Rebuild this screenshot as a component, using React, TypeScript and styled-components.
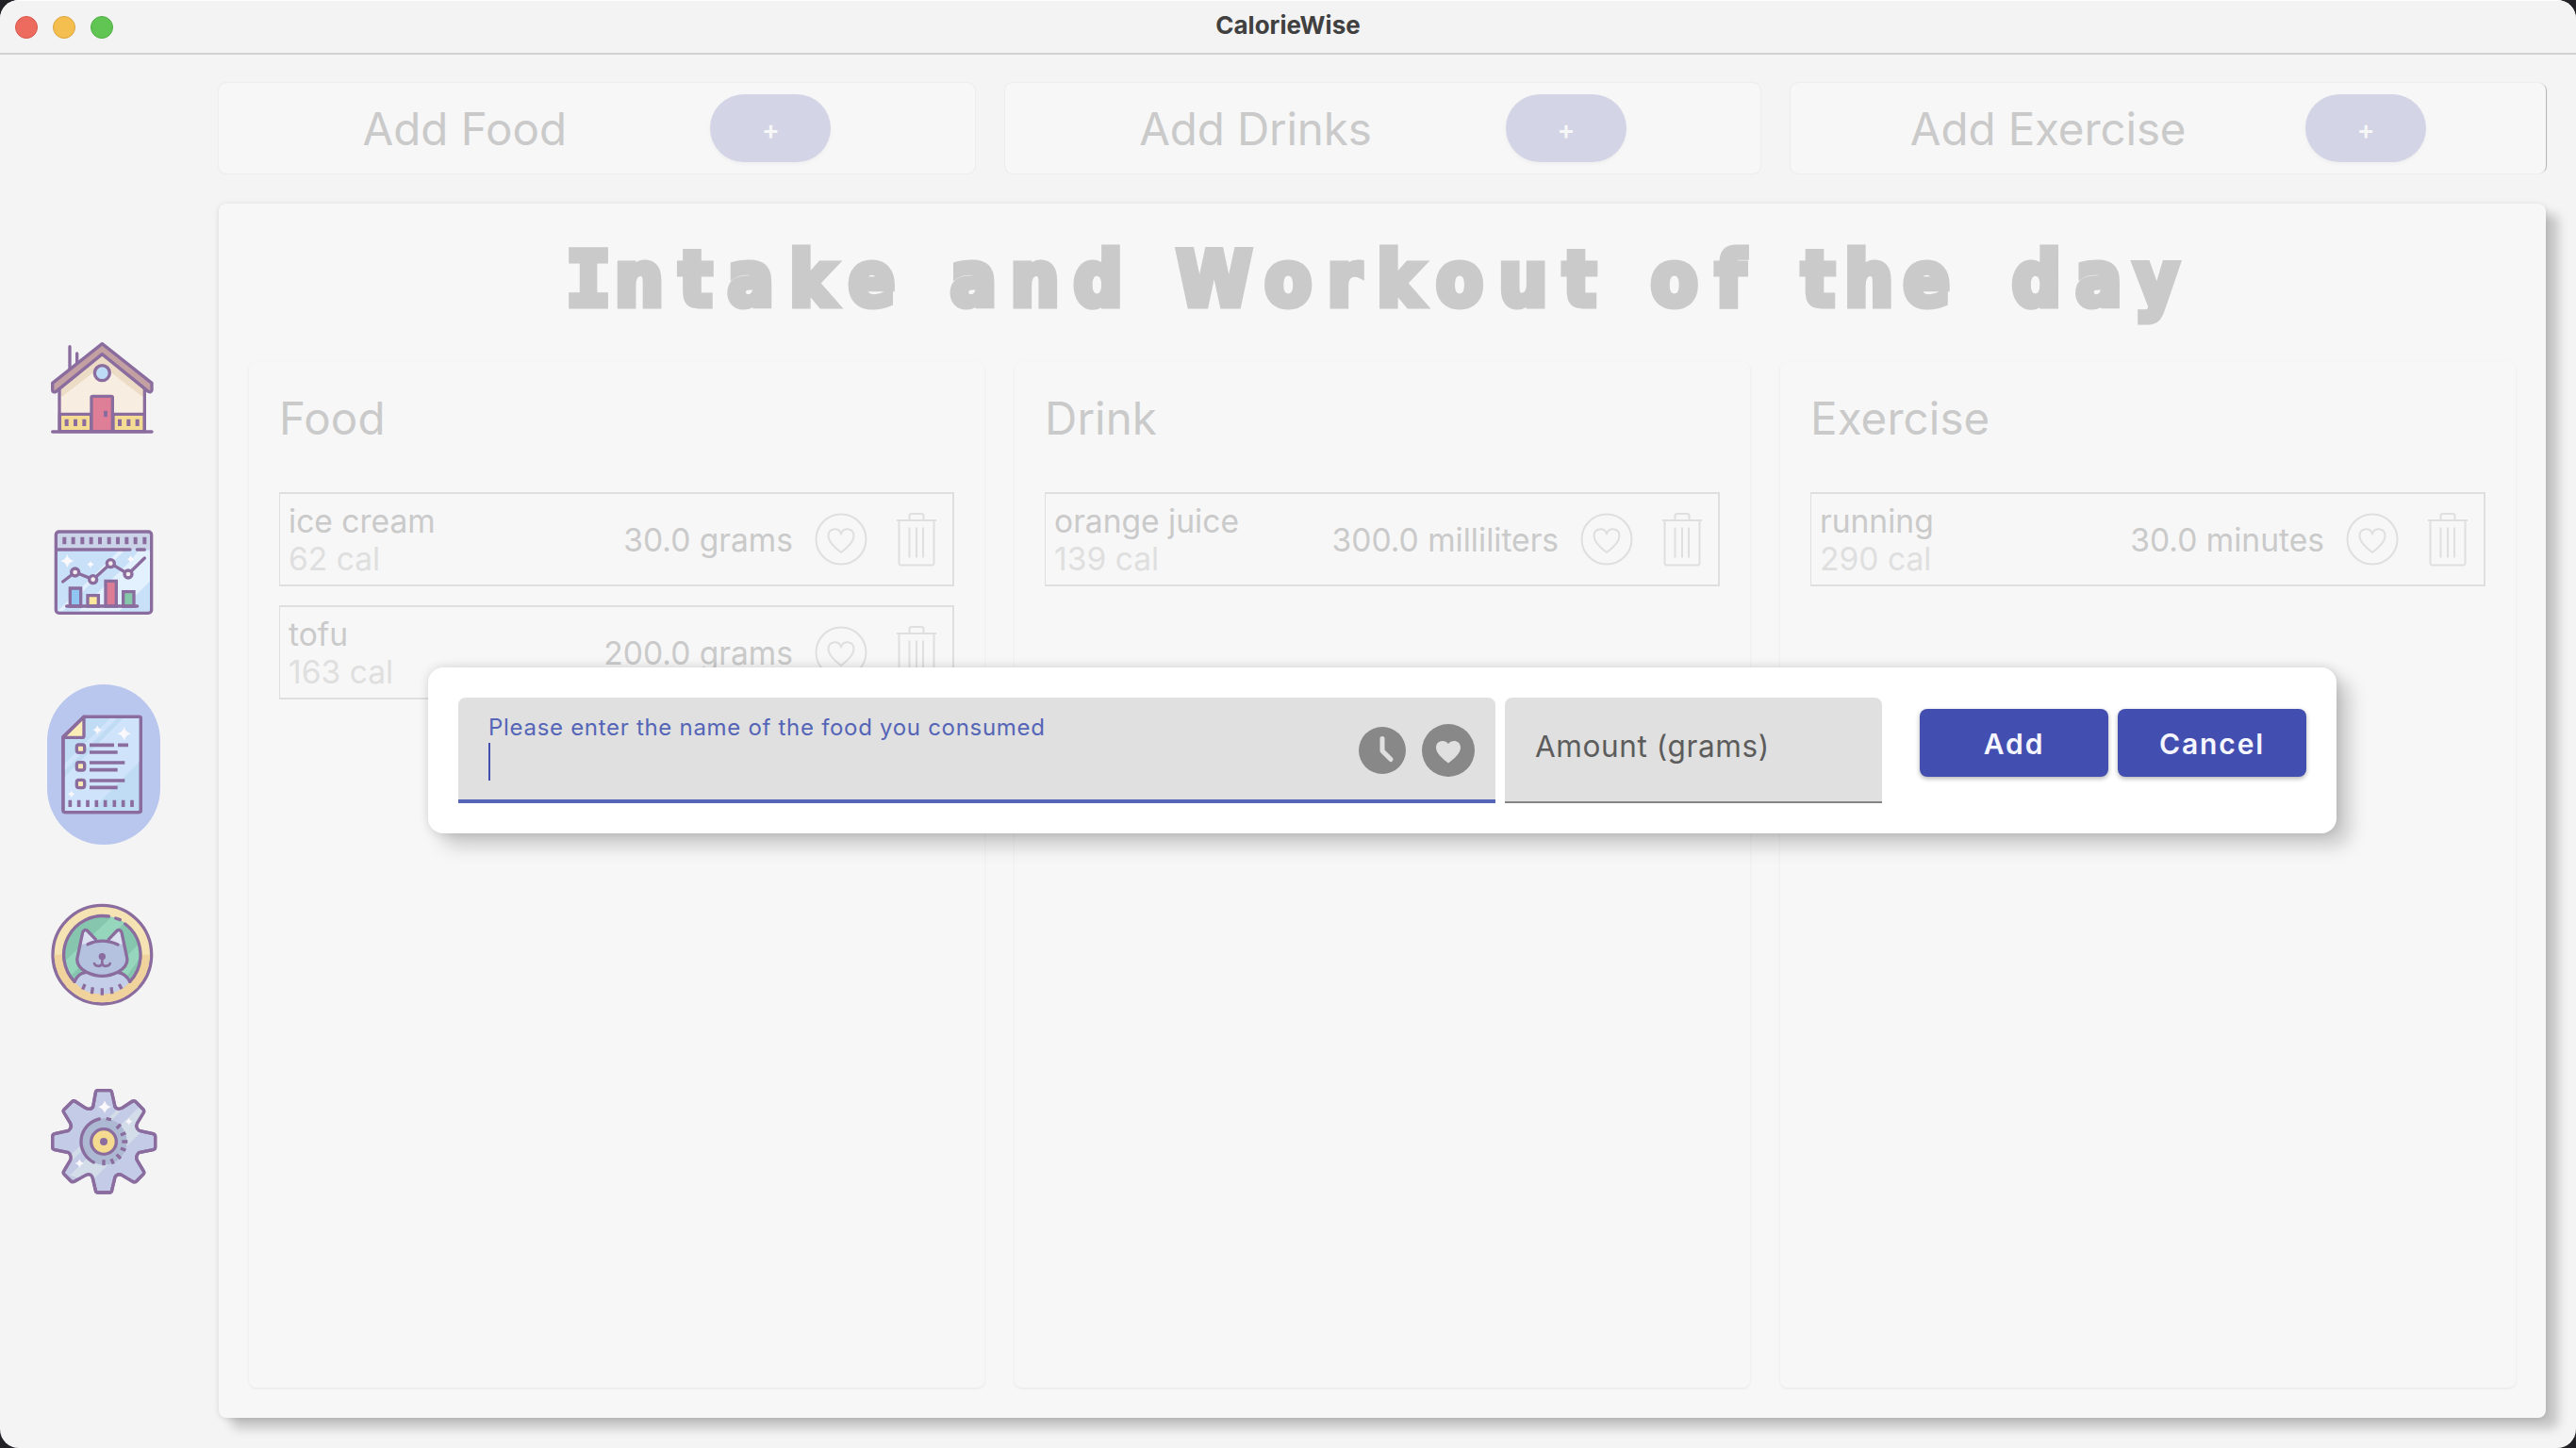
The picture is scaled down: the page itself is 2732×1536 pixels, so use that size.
import React from 'react';
import styled, { createGlobalStyle } from 'styled-components';

const GlobalStyle = createGlobalStyle`
  * { box-sizing: border-box; }
  body {
    margin: 0;
    background: #222226;
    font-family: Inter, "Liberation Sans", sans-serif;
  }
`;

const INK = '#cacaca';
const FAINT = '#dfdfdf';
const OUTLINE = '#8a6c9e';

const Window = styled.div`
  width: 2732px;
  height: 1536px;
  display: flex;
  flex-direction: column;
  background: #f4f4f4;
  border-radius: 20px;
  overflow: hidden;
`;

const TitleBar = styled.header`
  height: 58px;
  flex: none;
  display: grid;
  grid-template-columns: 1fr auto 1fr;
  align-items: center;
  padding: 0 16px;
  background: #f3f3f3;
  border-top: 1px solid #fdfdfd;
  border-bottom: 2px solid #d2d2d2;
`;

const Lights = styled.div`
  display: flex;
  gap: 16px;
`;

const Light = styled.span<{ $fill: string; $rim: string }>`
  width: 24px;
  height: 24px;
  border-radius: 50%;
  background: ${(p) => p.$fill};
  border: 1px solid ${(p) => p.$rim};
`;

const WindowTitle = styled.h1`
  margin: 0 0 4px;
  font-size: 26px;
  line-height: 32px;
  font-weight: 700;
  letter-spacing: 0;
  color: #404040;
`;

const Body = styled.div`
  flex: 1;
  display: flex;
`;

const Sidebar = styled.nav`
  width: 232px;
  padding: 268px 0 0 50px;
  display: flex;
  flex-direction: column;
  gap: 30px;
`;

const NavItem = styled.a<{ $active?: boolean }>`
  width: 120px;
  height: 170px;
  border-radius: 60px;
  background: ${(p) => (p.$active ? '#b9c6ee' : 'transparent')};
  svg { display: block; }
`;

const Main = styled.main`
  flex: 1;
  padding: 30px 32px 32px 0;
  display: flex;
  flex-direction: column;
  gap: 32px;
`;

const AddBar = styled.div`
  display: grid;
  grid-template-columns: 802px 801px 801px;
  gap: 32px;
`;

const AddCard = styled.section`
  height: 96px;
  display: flex;
  align-items: center;
  justify-content: space-evenly;
  background: #f7f7f7;
  border-radius: 8px;
  box-shadow: 0 0 2px rgba(0, 0, 0, 0.1);
  &:last-child { box-shadow: 0 0 2px rgba(0, 0, 0, 0.1), 2px 0 1px -1px rgba(0, 0, 0, 0.25); }
`;

const AddLabel = styled.span<{ $track: number }>`
  padding-top: 2px;
  font-size: 47.5px;
  line-height: 60px;
  letter-spacing: ${(p) => p.$track}px;
  color: ${INK};
`;

const PlusButton = styled.button`
  width: 128px;
  height: 72px;
  margin: 0;
  padding: 4px 0 0;
  border: 0;
  border-radius: 36px;
  background: #d3d4e6;
  color: #f7f7f7;
  font: 600 28px/60px Inter, sans-serif;
  box-shadow: 0 2px 4px rgba(0, 0, 0, 0.04);
`;

const Board = styled.section`
  flex: 1;
  padding: 0 32px 32px;
  display: flex;
  flex-direction: column;
  background: #f7f7f7;
  border-radius: 8px;
  box-shadow: 13px 11px 12px rgba(0, 0, 0, 0.2), 0 1px 6px rgba(0, 0, 0, 0.12);
`;

const Banner = styled.h2`
  height: 168px;
  margin: 0;
  padding: 34px 0 0 340px;
  display: grid;
  grid-template-columns: 404px 240px 503px 160px 223px 240px;
  align-items: start;
  font-family: "DejaVu Sans Condensed", "DejaVu Sans", sans-serif;
  font-stretch: condensed;
  font-weight: 700;
  font-size: 80px;
  line-height: 94px;
  color: ${INK};
  -webkit-text-stroke: 7px ${INK};
`;

const Word = styled.span<{ $track: number }>`
  letter-spacing: ${(p) => p.$track}px;
  white-space: nowrap;
`;

const SlabCap = styled.span`
  font-family: "DejaVu Sans Mono", monospace;
  font-stretch: normal;
  margin-left: -4px;
  letter-spacing: 4px;
`;

const Columns = styled.div`
  flex: 1;
  display: grid;
  grid-template-columns: repeat(3, 1fr);
  gap: 32px;
`;

const Column = styled.section`
  padding: 30px 32px;
  border-radius: 8px;
  box-shadow: 0 1px 3px rgba(0, 0, 0, 0.07);
`;

const ColumnTitle = styled.h3`
  margin: 0 0 48px;
  font-weight: 400;
  font-size: 47.5px;
  line-height: 60px;
  letter-spacing: 0.1px;
  color: ${INK};
`;

const Entry = styled.article`
  height: 100px;
  margin-bottom: 20px;
  padding: 0 16px 0 9px;
  display: flex;
  align-items: center;
  border: 2px solid ${FAINT};
  border-left-width: 1.5px;
`;

const EntryText = styled.div`
  flex: 1;
  padding-top: 2px;
  font-size: 33.6px;
  line-height: 40px;
  color: ${INK};
`;

const Calories = styled.div`
  color: ${FAINT};
`;

const Quantity = styled.span`
  margin-right: 23px;
  padding-top: 2px;
  font-size: 33.6px;
  line-height: 40px;
  color: ${INK};
`;

const HeartMark = styled.svg`
  margin-right: 30px;
`;

const Dialog = styled.form`
  position: absolute;
  left: 454px;
  top: 708px;
  width: 2024px;
  height: 176px;
  padding: 32px;
  display: flex;
  gap: 10px;
  background: #fff;
  border-radius: 16px;
  box-shadow: 14px 13px 20px rgba(0, 0, 0, 0.19), 0 0 12px rgba(0, 0, 0, 0.14);
`;

const Field = styled.div<{ $width: number; $focused?: boolean }>`
  width: ${(p) => p.$width}px;
  height: 112px;
  padding: 0 22px 0 32px;
  display: flex;
  align-items: center;
  border-radius: 8px 8px 0 0;
  background: #e0e0e0;
  border-bottom: ${(p) => (p.$focused ? '4px solid #5565b7' : '2px solid #858585')};
`;

const FieldBody = styled.div`
  flex: 1;
  align-self: stretch;
  padding-top: 16px;
`;

const FloatLabel = styled.div`
  font-size: 24px;
  line-height: 32px;
  letter-spacing: 0.7px;
  color: #5565b7;
`;

const Caret = styled.div`
  width: 2px;
  height: 40px;
  background: #4450b0;
`;

const Placeholder = styled.span`
  margin-top: -7px;
  font-size: 31.5px;
  line-height: 40px;
  letter-spacing: 0.6px;
  color: #5c5c5c;
`;

const FieldIcons = styled.div`
  display: flex;
  align-items: center;
  gap: 17px;
  margin-top: 4px;
`;

const Actions = styled.div`
  display: flex;
  gap: 10px;
  margin: 12px 0 0 30px;
`;

const Action = styled.button`
  width: 200px;
  height: 72px;
  padding: 2px 0 0;
  border: 0;
  border-radius: 8px;
  background: #434fb0;
  color: #f6f6ff;
  font: 600 30px/40px Inter, sans-serif;
  letter-spacing: 1.9px;
  box-shadow: 0 2px 5px rgba(0, 0, 0, 0.3);
`;

const Star = ({ x, y, r }: { x: number; y: number; r: number }) => (
  <path
    fill="#fbf8fc"
    d={`M${x} ${y - r}Q${x + r * 0.2} ${y - r * 0.2} ${x + r} ${y}Q${x + r * 0.2} ${y + r * 0.2} ${x} ${y + r}Q${x - r * 0.2} ${y + r * 0.2} ${x - r} ${y}Q${x - r * 0.2} ${y - r * 0.2} ${x} ${y - r}Z`}
  />
);

const IconCanvas = ({ top, children }: { top: number; children: React.ReactNode }) => (
  <svg width="120" height="170" viewBox={`150 ${top} 360 510`} fill="none" stroke={OUTLINE} strokeWidth="10" strokeLinecap="round" strokeLinejoin="round">
    {children}
  </svg>
);

const HomeIcon = () => (
  <IconCanvas top={-42}>
    <path d="M190 216L325 108L460 216V353H190Z" fill="#f7eee1" stroke="none" />
    <path d="M190 216L325 108L460 216V240H450L325 143L200 240H190Z" fill="#ecdcc5" stroke="none" />
    <path d="M190 298H290V353H190ZM360 298H460V353H360Z" fill="#f4dc94" />
    <path d="M189 214V350M460 214V350M167 354H483" />
    <path d="M222 83V158M245 105V138" />
    <path d="M325 74L483 199V222Q480 230 472 226L325 107L178 226Q168 230 167 222V199Z" fill="#c3a0a2" />
    <circle cx="325" cy="167" r="24" fill="#bedcf5" />
    <path d="M291 353V244Q291 241 295 241H354Q358 241 358 244V353Z" fill="#df7e97" />
    <path d="M212 314V336M240 314V336M268 314V336M381 314V336M409 314V336M437 314V336M336 287V307" strokeWidth="12" strokeLinecap="butt" />
  </IconCanvas>
);

const ChartIcon = () => (
  <IconCanvas top={558}>
    <rect x="178" y="672" width="304" height="259" rx="9" fill="#c9e1f8" stroke="none" />
    <path d="M183 925L378 733H395L200 925ZM250 925L415 766L440 733H477V830L380 925Z" fill="#e3f0fd" stroke="none" />
    <path d="M180 675H480V728H180Z" fill="#cbd3e8" stroke="none" />
    <path d="M205 689V712M233 689V712M262 689V712M290 689V712M318 689V712M347 689V712M375 689V712M403 689V712M431 689V712M460 689V712" strokeWidth="12" strokeLinecap="butt" />
    <path d="M182 729H414M436 729H460" />
    <g stroke="none"><Star x={214} y={765} r={21} /><Star x={288} y={776} r={11} /><Star x={416} y={760} r={13} /></g>
    <path d="M200 831L239 801L296 824L352 773L408 807L460 756" />
    <g fill="#f4ecec">
      <circle cx="239" cy="801" r="12" /><circle cx="296" cy="824" r="12" />
      <circle cx="352" cy="773" r="12" /><circle cx="408" cy="807" r="12" />
    </g>
    <g strokeLinejoin="miter">
      <path d="M223 909V852H257V909Z" fill="#90c6f2" />
      <path d="M279 909V875H313V909Z" fill="#fde89c" />
      <path d="M336 909V829H370V909Z" fill="#dc7c95" />
      <path d="M392 909V863H426V909Z" fill="#86c8aa" />
    </g>
    <path d="M212 909H437" />
    <rect x="178" y="672" width="304" height="259" rx="10" />
  </IconCanvas>
);

const DiaryIcon = () => (
  <IconCanvas top={78}>
    <path d="M267 181H443Q448 181 448 187V478Q448 485 441 485H207Q201 485 201 478V244Z" fill="#bfdcf4" />
    <path d="M206 330L350 186H372L206 352ZM206 372L392 186H443V325L290 480H206Z" fill="#cfe4fa" stroke="none" />
    <path d="M201 246L267 181V242Q267 247 261 247H201Z" fill="#fbecb8" />
    <path d="M267 181H443Q448 181 448 187V478Q448 485 441 485H207Q201 485 201 478V246L267 181" />
    <g stroke="none"><Star x={310} y={223} r={15} /><Star x={395} y={235} r={22} /><Star x={227} y={427} r={11} /></g>
    <g fill="#fbe9b4">
      <rect x="244" y="270" width="25" height="25" rx="7" />
      <rect x="244" y="326" width="25" height="25" rx="7" />
      <rect x="244" y="382" width="25" height="25" rx="7" />
    </g>
    <path d="M285 271H363M375 271H408M285 294H374M285 327H397M285 350H374M285 384H397M285 406H374" strokeWidth="11" strokeLinecap="butt" />
    <path d="M223 446V468M251 446V468M279 446V468M307 446V468M335 446V468M364 446V468M392 446V468M420 446V468" strokeWidth="11" strokeLinecap="butt" />
  </IconCanvas>
);

const CatIcon = () => (
  <IconCanvas top={-12}>
    <circle cx="325" cy="248" r="157" fill="#f5e3b4" />
    <path d="M173 248H477A152 152 0 0 1 173 248Z" fill="#f0d29d" stroke="none" />
    <circle cx="325" cy="248" r="124" fill="#86c6af" stroke="none" />
    <path d="M205 270L355 128L395 148L222 318ZM340 318L440 215L448 255L400 320Z" fill="#95d6bc" stroke="none" />
    <path d="M236 334L414 334L440 350Q390 392 325 392Q262 392 210 350Z" fill="#f0d29d" stroke="none" />
    <path d="M236 334Q248 306 277 306L372 306Q402 306 414 334Q380 374 325 374Q268 374 236 334Z" fill="#c5cee8" stroke="none" />
    <path d="M237 334A124 124 0 0 1 346 126M368 132L382 137M398 150A124 124 0 0 1 413 334" />
    <path d="M237 334Q248 308 272 305M413 334Q400 308 376 305" />
    <path d="M245 260L261 177Q265 165 276 170L304 203H345L372 170Q383 166 387 177L404 260Q410 286 375 304Q325 329 274 304Q239 286 245 260Z" fill="#b5c2df" stroke="none" />
    <path d="M256 215L264 178L275 172L302 204L274 214ZM394 215L386 178L374 172L347 204L375 214Z" fill="#dce1f1" stroke="none" />
    <path d="M304 199L277 171Q267 166 263 177L246 258Q241 284 274 303Q325 329 376 303Q409 284 404 258L387 177Q383 166 373 171L346 199" />
    <path d="M279 215Q325 193 375 216" />
    <path d="M325 254V276Q321 286 312 284Q302 284 300 276M325 276Q329 286 338 284Q348 284 350 276" strokeWidth="8" />
    <circle cx="325" cy="254" r="11" fill={OUTLINE} stroke="none" />
    <path d="M270 342L263 359M295 352L292 373M325 355V377M354 352L357 373M379 342L387 357" strokeLinecap="butt" />
  </IconCanvas>
);

const tooth = 'M272 736Q288 744 296 732L304 687Q305 680 312 680H348Q355 680 356 687L366 732Q374 744 388 736L422 714Q430 712 434 718L456 741Q460 746 456 752L436 785Q430 797 442 808L487 818Q494 820 494 827V861Q494 867 487 869L442 878Q430 890 436 902L457 937Q460 943 456 947L434 969Q430 973 422 970L388 950Q374 942 366 956L356 998Q355 1005 348 1005H312Q305 1005 304 998L294 956Q288 942 272 950L238 969Q230 973 226 969L204 947Q200 943 203 937L224 902Q230 890 218 878L174 869Q167 867 167 861V827Q167 820 174 818L218 808Q230 797 224 785L203 750Q200 745 204 741L228 717Q232 712 238 714Z';

const GearIcon = () => (
  <IconCanvas top={588}>
    <defs><clipPath id="gear"><path d={tooth} /></clipPath></defs>
    <path d={tooth} fill="#c3cbe7" />
    <g clipPath="url(#gear)">
      <path d="M200 910L410 705H424L212 922ZM222 950L440 735L462 750L460 802L300 960L260 962Z" fill="#d3dce9" stroke="none" />
    </g>
    <path d={tooth} />
    <circle cx="330" cy="843" r="74" fill="#adb8d2" stroke="none" />
    <path d="M316 771A74 74 0 0 0 298 909" />
    <path d="M338 770L354 773M371 801L384 788M384 822L400 815M388 843H406M384 864L400 871M371 884L384 897M354 898L361 914M330 901V919" strokeLinecap="butt" />
    <circle cx="330" cy="843" r="40" fill="#f5db8f" />
    <circle cx="330" cy="843" r="12" fill={OUTLINE} stroke="none" />
    <g stroke="none"><Star x={333} y={733} r={21} /><Star x={410} y={779} r={11} /><Star x={253} y={912} r={14} /></g>
  </IconCanvas>
);

const TrashMark = () => (
  <svg width="44" height="58" viewBox="0 0 44 58" fill="none" stroke={FAINT} strokeWidth="2">
    <path d="M1 9H43M14.500 8V4Q14.500 2 17 2H27Q29.500 2 29.500 4V8M3.500 9V54Q3.500 56.500 6 56.500H38Q40.500 56.500 40.500 54V9M14.500 16.500V48.500M22 16.500V48.500M29 16.500V48.500" />
  </svg>
);

type EntryData = { name: string; cal: string; qty: string };

const EntryRow = ({ name, cal, qty }: EntryData) => (
  <Entry>
    <EntryText>
      {name}
      <Calories>{cal}</Calories>
    </EntryText>
    <Quantity>{qty}</Quantity>
    <HeartMark width="56" height="56" viewBox="0 0 56 56" fill="none" stroke={FAINT} strokeWidth="2">
      <circle cx="28" cy="28" r="26.500" />
      <path d="M28 42C20 36 14.500 30 14.500 24.500C14.500 16 25 15 28 22C31 15 41.500 16 41.500 24.500C41.500 30 36 36 28 42Z" />
    </HeartMark>
    <TrashMark />
  </Entry>
);

const adders = [
  { label: 'Add Food', track: 0 },
  { label: 'Add Drinks', track: -0.15 },
  { label: 'Add Exercise', track: -0.1 },
];

const columns: { title: string; entries: EntryData[] }[] = [
  {
    title: 'Food',
    entries: [
      { name: 'ice cream', cal: '62 cal', qty: '30.0 grams' },
      { name: 'tofu', cal: '163 cal', qty: '200.0 grams' },
    ],
  },
  { title: 'Drink', entries: [{ name: 'orange juice', cal: '139 cal', qty: '300.0 milliliters' }] },
  { title: 'Exercise', entries: [{ name: 'running', cal: '290 cal', qty: '30.0 minutes' }] },
];

export default function App() {
  return (
    <>
      <GlobalStyle />
      <Window>
        <TitleBar>
          <Lights>
            <Light $fill="#ed6a5f" $rim="#d8564b" />
            <Light $fill="#f5bf4f" $rim="#d9a23c" />
            <Light $fill="#61c554" $rim="#4fae42" />
          </Lights>
          <WindowTitle>CalorieWise</WindowTitle>
        </TitleBar>
        <Body>
          <Sidebar>
            <NavItem><HomeIcon /></NavItem>
            <NavItem><ChartIcon /></NavItem>
            <NavItem $active><DiaryIcon /></NavItem>
            <NavItem><CatIcon /></NavItem>
            <NavItem><GearIcon /></NavItem>
          </Sidebar>
          <Main>
            <AddBar>
              {adders.map((a) => (
                <AddCard key={a.label}>
                  <AddLabel $track={a.track}>{a.label}</AddLabel>
                  <PlusButton>+</PlusButton>
                </AddCard>
              ))}
            </AddBar>
            <Board>
              <Banner>
                <Word $track={17}><SlabCap>I</SlabCap>ntake</Word>
                <Word $track={15.5}>and</Word>
                <Word $track={17}>Workout</Word>
                <Word $track={19}>of</Word>
                <Word $track={11}>the</Word>
                <Word $track={16}>day</Word>
              </Banner>
              <Columns>
                {columns.map((c) => (
                  <Column key={c.title}>
                    <ColumnTitle>{c.title}</ColumnTitle>
                    {c.entries.map((e) => <EntryRow key={e.name} {...e} />)}
                  </Column>
                ))}
              </Columns>
            </Board>
          </Main>
        </Body>
        <Dialog>
          <Field $width={1100} $focused>
            <FieldBody>
              <FloatLabel>Please enter the name of the food you consumed</FloatLabel>
              <Caret />
            </FieldBody>
            <FieldIcons>
              <svg width="50" height="50" viewBox="0 0 50 50">
                <circle cx="25" cy="25" r="25" fill="#888" />
                <path d="M25 12.500V25.500L34 34.500" fill="none" stroke="#e0e0e0" strokeWidth="5" strokeLinecap="round" strokeLinejoin="round" />
              </svg>
              <svg width="56" height="56" viewBox="0 0 56 56">
                <circle cx="28" cy="28" r="28" fill="#888" />
                <path d="M28 41.500C22 37 15 31 15 25C15 17 24.500 16 28 21C31.500 16 41 17 41 25C41 31 34 37 28 41.500Z" fill="#e0e0e0" />
              </svg>
            </FieldIcons>
          </Field>
          <Field $width={400}>
            <Placeholder>Amount (grams)</Placeholder>
          </Field>
          <Actions>
            <Action type="button">Add</Action>
            <Action type="button">Cancel</Action>
          </Actions>
        </Dialog>
      </Window>
    </>
  );
}
